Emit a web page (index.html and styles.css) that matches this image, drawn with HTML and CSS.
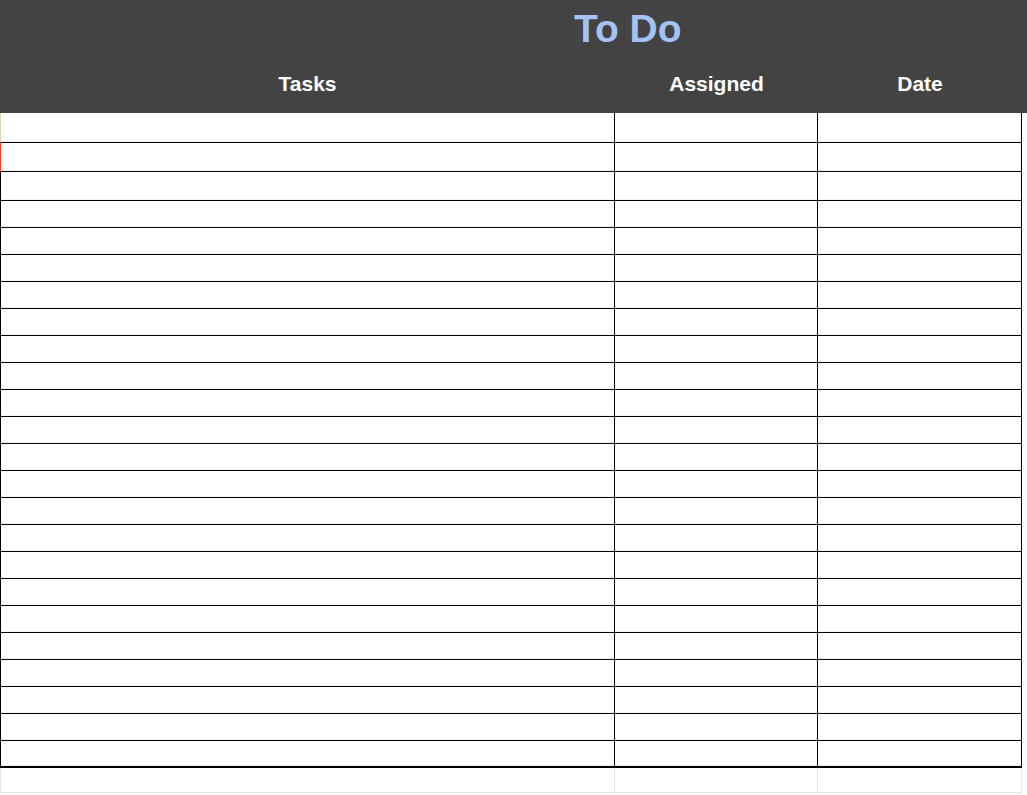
FILE: index.html
```html
<!DOCTYPE html>
<html lang="en">
<head>
<meta charset="utf-8">
<title>To Do</title>
<link rel="stylesheet" href="styles.css">
</head>
<body>
<div class="sheet">
  <header class="head">
    <h1 class="title">To Do</h1>
    <div class="cols">
      <div class="col-head">Tasks</div>
      <div class="col-head">Assigned</div>
      <div class="col-head">Date</div>
    </div>
  </header>
  <div class="grid" id="grid"></div>
</div>
<script src="app.js"></script>
</body>
</html>
```

FILE: app.js
```js
(function () {
  var grid = document.getElementById('grid');
  var total = 25;
  for (var r = 0; r < total; r++) {
    var row = document.createElement('div');
    var cls = 'row';
    if (r === 0) cls += ' row-first';
    else if (r < 3) cls += ' row-tall';
    if (r === 1) cls += ' row-mark';
    if (r === total - 2) cls += ' row-end';
    if (r === total - 1) cls += ' row-empty';
    row.className = cls;
    for (var c = 0; c < 3; c++) {
      var cell = document.createElement('div');
      cell.className = 'cell';
      row.appendChild(cell);
    }
    grid.appendChild(row);
  }
})();
```

FILE: styles.css
```css
* { box-sizing: border-box; }
html, body { margin: 0; padding: 0; background: #ffffff; }
body { font-family: "Liberation Sans", Arial, sans-serif; overflow: hidden; }

.sheet { width: 1027px; height: 795px; }

.head {
  background: #434343;
  height: 113px;
  padding-top: 9px;
}
.title {
  margin: 0;
  padding-left: 574px;
  font-size: 39px;
  line-height: 39px;
  font-weight: bold;
  color: #a4c2f4;
}
.cols {
  display: grid;
  grid-template-columns: 615px 203px 204px;
  margin-top: 25px;
}
.col-head {
  text-align: center;
  color: #ffffff;
  font-weight: bold;
  font-size: 21px;
  line-height: 21px;
}

.grid { width: 1027px; }
.row {
  display: grid;
  grid-template-columns: 615px 203px 204px;
  height: 27px;
}
.row-first { height: 30px; }
.row-tall { height: 29px; }
.cell {
  border-right: 1px solid #000000;
  border-bottom: 1px solid #000000;
  box-shadow: inset 0 -3px 0 -2px #f2f2f2;
}
.cell:first-child { border-left: 1px solid #000000; }
.row-first .cell:first-child { border-left-color: #d9d8b8; }
.row-mark .cell:first-child { border-left-color: #e0483c; }
.row-end .cell { border-bottom: 2px solid #000000; }
.row-empty { height: 25px; }
.row-empty .cell {
  border-right-color: #e6e6e6;
  border-bottom-color: #e2e2e2;
  box-shadow: none;
}
.row-empty .cell:first-child { border-left-color: #e6e6e6; }
```
